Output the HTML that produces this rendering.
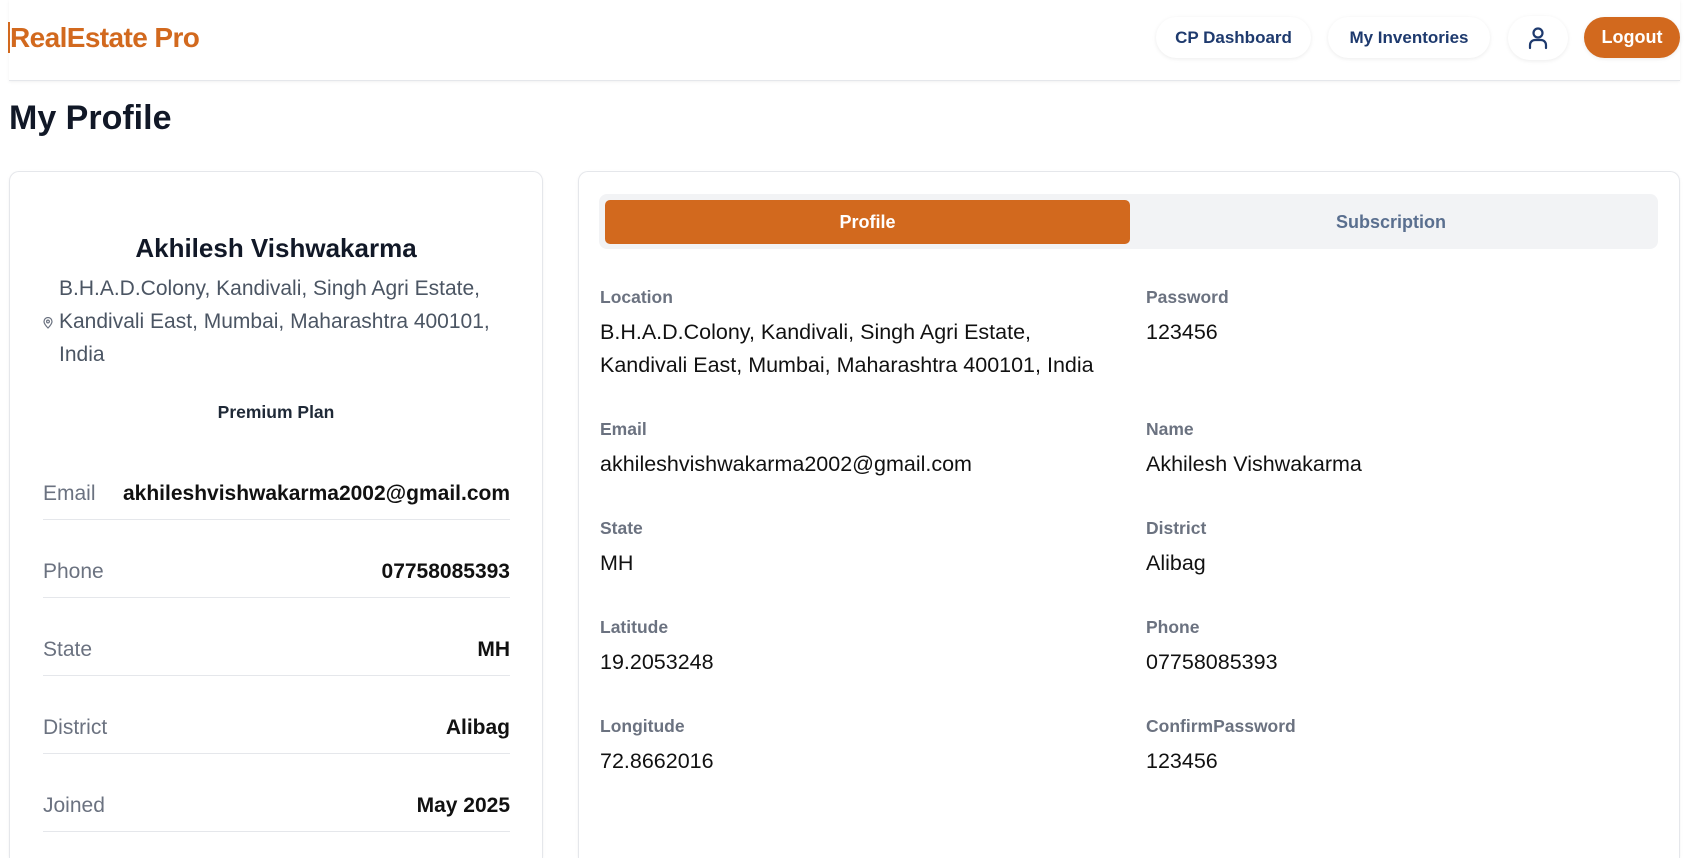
<!DOCTYPE html>
<html style="width:1693px;height:858px;overflow:hidden"><head><meta charset="utf-8"><style>
*{box-sizing:border-box;margin:0;padding:0}
body{width:1693px;height:858px;overflow:hidden;background:#fff;font-family:"Liberation Sans",sans-serif;color:#111827;position:relative}
.a{position:absolute;white-space:nowrap}
.hdr{position:absolute;left:9px;top:0;width:1671px;height:81px;border-bottom:1px solid #e5e7eb;box-shadow:0 1px 3px rgba(0,0,0,.06)}
.logo{left:8px;top:22px;font-size:28px;font-weight:700;color:#d2691e;letter-spacing:-0.6px;border-left:2px solid #d2691e;line-height:31px}
.pill{position:absolute;top:17px;height:41px;border-radius:21px;background:#fff;box-shadow:0 1px 4px rgba(0,0,0,.08);font-size:17px;font-weight:700;color:#1e3a6e;display:flex;align-items:center;justify-content:center}
.card{position:absolute;top:171px;height:687px;border:1px solid #e5e7eb;border-bottom:none;border-radius:10px 10px 0 0;box-shadow:0 1px 3px rgba(0,0,0,.05)}
.row{position:absolute;left:43px;width:467px;height:78px;border-bottom:1px solid #e5e7eb;font-size:21px}
.row .l{position:absolute;left:0;top:40px;color:#6b7280}
.row .v{position:absolute;right:0;top:40px;font-weight:700;color:#111}
.lab{font-size:17.5px;font-weight:700;color:#6b7280}
.val{font-size:21.5px;color:#111;line-height:33px}
</style></head><body>
<div class="hdr"></div>
<div class="a logo">RealEstate Pro</div>
<div class="pill" style="left:1156px;width:155px">CP Dashboard</div>
<div class="pill" style="left:1328px;width:162px">My Inventories</div>
<div class="pill" style="left:1508px;width:60px;height:44px;border-radius:22px;top:16px">
<svg width="22" height="24" viewBox="0 0 22 24" fill="none" stroke="#1e3a6e" stroke-width="2.2" stroke-linecap="round"><circle cx="11" cy="7" r="4.5"/><path d="M3 22v-3a5 5 0 0 1 5-5h6a5 5 0 0 1 5 5v3"/></svg></div>
<div class="pill" style="left:1584px;width:96px;background:#d2691e;color:#fff;font-size:18px">Logout</div>

<div class="a" style="left:9px;top:99px;font-size:34px;font-weight:700;color:#111827">My Profile</div>

<div class="card" style="left:9px;width:534px"></div>
<div class="a" style="left:9px;width:534px;text-align:center;top:233px;font-size:26px;font-weight:700">Akhilesh Vishwakarma</div>
<div class="a" style="left:59px;top:272px;font-size:21px;color:#4b5563;line-height:33px">B.H.A.D.Colony, Kandivali, Singh Agri Estate,<br>Kandivali East, Mumbai, Maharashtra 400101,<br>India</div>
<svg class="a" style="left:43px;top:317px" width="10" height="12" viewBox="0 0 10 12" fill="none" stroke="#6b7280" stroke-width="1.2"><path d="M5 11C2 8 1 6 1 4.5a4 4 0 0 1 8 0C9 6 8 8 5 11z"/><circle cx="5" cy="4.5" r="1.4"/></svg>
<div class="a" style="left:9px;width:534px;text-align:center;top:402px;font-size:17.5px;font-weight:700;color:#1f2937">Premium Plan</div>
<div class="row" style="top:442px"><span class="l">Email</span><span class="v">akhileshvishwakarma2002@gmail.com</span></div>
<div class="row" style="top:520px"><span class="l">Phone</span><span class="v">07758085393</span></div>
<div class="row" style="top:598px"><span class="l">State</span><span class="v">MH</span></div>
<div class="row" style="top:676px"><span class="l">District</span><span class="v">Alibag</span></div>
<div class="row" style="top:754px"><span class="l">Joined</span><span class="v">May 2025</span></div>

<div class="card" style="left:578px;width:1102px"></div>
<div class="a" style="left:599px;top:194px;width:1059px;height:55px;background:#f2f3f5;border-radius:8px"></div>
<div class="a" style="left:605px;top:200px;width:525px;height:44px;background:#d2691e;border-radius:5px;color:#fff;font-size:18px;font-weight:700;display:flex;align-items:center;justify-content:center">Profile</div>
<div class="a" style="left:1130px;top:200px;width:522px;height:44px;color:#5a6f8f;font-size:18px;font-weight:700;display:flex;align-items:center;justify-content:center">Subscription</div>

<div class="a lab" style="left:600px;top:287px">Location</div>
<div class="a val" style="left:600px;top:316px">B.H.A.D.Colony, Kandivali, Singh Agri Estate,<br>Kandivali East, Mumbai, Maharashtra 400101, India</div>
<div class="a lab" style="left:1146px;top:287px">Password</div>
<div class="a val" style="left:1146px;top:316px">123456</div>
<div class="a lab" style="left:600px;top:419px">Email</div>
<div class="a val" style="left:600px;top:448px">akhileshvishwakarma2002@gmail.com</div>
<div class="a lab" style="left:1146px;top:419px">Name</div>
<div class="a val" style="left:1146px;top:448px">Akhilesh Vishwakarma</div>
<div class="a lab" style="left:600px;top:518px">State</div>
<div class="a val" style="left:600px;top:547px">MH</div>
<div class="a lab" style="left:1146px;top:518px">District</div>
<div class="a val" style="left:1146px;top:547px">Alibag</div>
<div class="a lab" style="left:600px;top:617px">Latitude</div>
<div class="a val" style="left:600px;top:646px">19.2053248</div>
<div class="a lab" style="left:1146px;top:617px">Phone</div>
<div class="a val" style="left:1146px;top:646px">07758085393</div>
<div class="a lab" style="left:600px;top:716px">Longitude</div>
<div class="a val" style="left:600px;top:745px">72.8662016</div>
<div class="a lab" style="left:1146px;top:716px">ConfirmPassword</div>
<div class="a val" style="left:1146px;top:745px">123456</div>
</body></html>
